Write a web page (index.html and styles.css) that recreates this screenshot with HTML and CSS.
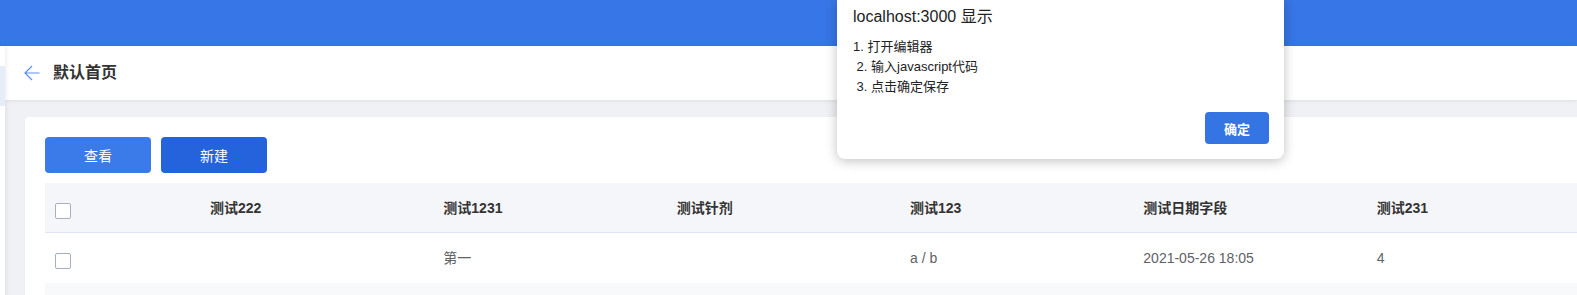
FILE: index.html
```html
<!DOCTYPE html>
<html lang="zh">
<head>
<meta charset="utf-8">
<title>默认首页</title>
<link rel="stylesheet" href="styles.css">
</head>
<body>
<div class="topbar"></div>
<div class="main">
  <aside class="sidebar"><div class="side-active"></div></aside>
  <div class="content">
    <div class="page-header">
      <svg class="back" width="16" height="16" viewBox="0 0 16 16"><path d="M15.5 8H1M8 1L1 8l7 7" fill="none" stroke="#5b8ff1" stroke-width="1.2"/></svg>
      <h1 class="title">默认首页</h1>
    </div>
    <div class="body-area">
      <div class="card">
        <div class="toolbar">
          <button class="btn btn-view">查看</button>
          <button class="btn btn-new">新建</button>
        </div>
        <div class="table">
          <div class="tr thead">
            <div class="td chk"><span class="checkbox"></span></div>
            <div class="td">测试222</div>
            <div class="td">测试1231</div>
            <div class="td">测试针剂</div>
            <div class="td">测试123</div>
            <div class="td">测试日期字段</div>
            <div class="td">测试231</div>
            <div class="td"></div>
          </div>
          <div class="tr row">
            <div class="td chk"><span class="checkbox"></span></div>
            <div class="td"></div>
            <div class="td">第一</div>
            <div class="td"></div>
            <div class="td">a / b</div>
            <div class="td">2021-05-26 18:05</div>
            <div class="td">4</div>
            <div class="td"></div>
          </div>
          <div class="tr row striped">
            <div class="td chk"></div>
          </div>
        </div>
      </div>
    </div>
  </div>
</div>
<div class="dialog">
  <div class="dialog-title">localhost:3000 显示</div>
  <div class="dialog-msg">1. 打开编辑器
 2. 输入javascript代码
 3. 点击确定保存</div>
  <div class="dialog-actions"><button class="dialog-ok">确定</button></div>
</div>
</body>
</html>
```
FILE: styles.css
```css
html, body {
  margin: 0;
  padding: 0;
  overflow: hidden;
  background: #f0f1f5;
  font-family: "Liberation Sans", "Noto Sans CJK SC", sans-serif;
}
body {
  width: 1577px;
  height: 295px;
  position: relative;
}
.topbar {
  height: 46px;
  background: #3776e7;
}
.main {
  display: flex;
  align-items: stretch;
}
.sidebar {
  width: 5px;
  flex: none;
  background: #fff;
  padding-top: 20px;
  box-shadow: 1px 0 4px rgba(0, 0, 0, 0.08);
  position: relative;
  z-index: 2;
}
.side-active {
  height: 40px;
  background: #e5edfb;
}
.content {
  flex: 1;
  min-width: 0;
  display: flex;
  flex-direction: column;
}
.page-header {
  flex: none;
  height: 54px;
  background: #fff;
  display: flex;
  align-items: center;
  padding-left: 19px;
  box-shadow: 0 1px 4px rgba(0, 0, 0, 0.08);
  position: relative;
  z-index: 1;
}
.back {
  display: block;
  margin-right: 13px;
}
.title {
  margin: 0;
  font-size: 16px;
  font-weight: 700;
  color: #333;
  line-height: 22px;
}
.body-area {
  flex: none;
  padding: 17px 0 0 20px;
}
.card {
  width: 1700px;
  background: #fff;
  border-radius: 4px;
  padding: 20px;
  box-sizing: border-box;
  height: 200px;
}
.toolbar {
  display: flex;
  gap: 10px;
  margin-bottom: 10px;
}
.btn {
  width: 106px;
  height: 36px;
  border: none;
  border-radius: 4px;
  color: #fff;
  font-family: inherit;
  font-size: 14px;
  padding: 0;
}
.btn-view { background: #3b7ae9; }
.btn-new { background: #2563dd; }
.tr {
  display: grid;
  grid-template-columns: 149px repeat(7, 233.33px);
  align-items: center;
}
.thead {
  height: 49px;
  background: #f5f6f9;
  border-bottom: 1px solid #dce6f7;
  font-weight: 700;
  color: #333;
  font-size: 14px;
}
.row {
  height: 50px;
  font-size: 14px;
  color: #606266;
}
.striped {
  background: #f8f9fb;
}
.td {
  padding-left: 16px;
  line-height: 20px;
  white-space: nowrap;
}
.chk {
  padding-left: 10px;
  padding-top: 6px;
}
.checkbox {
  display: block;
  width: 14px;
  height: 14px;
  border: 1px solid #a7b0bf;
  border-radius: 2px;
  background: #fff;
}
.dialog {
  position: absolute;
  top: 0;
  left: 837px;
  width: 447px;
  height: 159px;
  box-sizing: border-box;
  background: #fff;
  border-radius: 0 0 8px 8px;
  box-shadow: 0 2px 12px rgba(0, 0, 0, 0.25);
  padding: 6px 15px 15px 16px;
  color: #222;
  z-index: 10;
}
.dialog-title {
  font-size: 16px;
  line-height: 22px;
}
.dialog-msg {
  margin-top: 9px;
  font-size: 13px;
  line-height: 20px;
  white-space: pre;
}
.dialog-actions {
  display: flex;
  justify-content: flex-end;
  margin-top: 15px;
}
.dialog-ok {
  width: 64px;
  height: 32px;
  border: none;
  border-radius: 4px;
  background: #3574e3;
  color: #fff;
  font-family: inherit;
  font-size: 13px;
  font-weight: 700;
  padding: 0;
}
```
